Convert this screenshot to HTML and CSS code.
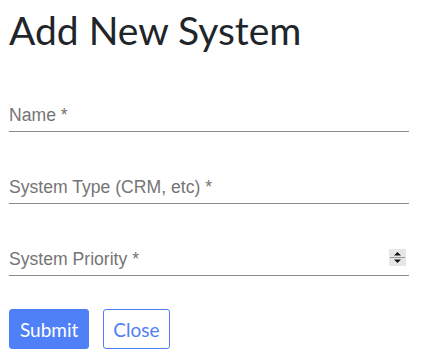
FILE: index.html
```html
<!DOCTYPE html>
<html lang="en">
<head>
    <meta charset="UTF-8">
    <meta name="viewport" content="width=device-width, initial-scale=1.0">
    <title>Add New System</title>
    <link rel="stylesheet" href="styles.css">
</head>
<body>
    <div class="page">
        <h1 class="title">Add New System</h1>
        <form class="system-form">
            <div class="field">
                <input class="field-input" type="text" placeholder="Name *">
            </div>
            <div class="field">
                <input class="field-input" type="text" placeholder="System Type (CRM, etc) *">
            </div>
            <div class="field field-number">
                <input class="field-input" type="number" placeholder="System Priority *">
                <span class="spin">
                    <svg width="17" height="17" viewBox="0 0 17 17">
                        <rect x="0" y="0" width="17" height="17" fill="#e6e6e6"/>
                        <line x1="1" y1="8.5" x2="16" y2="8.5" stroke="#9a9a9a" stroke-width="1"/>
                        <path d="M5 6.5 L8.5 3 L12 6.5 Z" fill="#111"/>
                        <path d="M5 10.5 L12 10.5 L8.5 14 Z" fill="#111"/>
                    </svg>
                </span>
            </div>
            <div class="actions">
                <button class="btn btn-primary" type="button">Submit</button>
                <button class="btn btn-outline" type="button">Close</button>
            </div>
        </form>
    </div>
</body>
</html>
```

FILE: styles.css
```css
body {
    margin: 0;
    font-family: Lato, "Noto Sans", sans-serif;
    background-color: #fff;
    color: #212529;
}
.page {
    padding: 0 9px;
}
.title {
    margin: 0;
    padding-top: 6px;
    font-size: 39px;
    font-weight: 400;
    line-height: 48px;
}
.system-form {
    width: 400px;
    margin-top: 38px;
}
.field {
    position: relative;
    margin-bottom: 32px;
}
.field-input {
    display: block;
    width: 100%;
    height: 40px;
    box-sizing: border-box;
    padding: 8px 0 0;
    border: none;
    border-bottom: 1px solid #8a8a8a;
    font-family: "Liberation Sans", Arial, sans-serif;
    font-size: 17.6px;
    color: #333;
    outline: none;
    -moz-appearance: textfield;
}
.field-input::placeholder {
    color: #757575;
}
.field-input::-webkit-inner-spin-button,
.field-input::-webkit-outer-spin-button {
    -webkit-appearance: none;
    margin: 0;
}
.spin {
    position: absolute;
    right: 3px;
    top: 13px;
    width: 17px;
    height: 17px;
    line-height: 0;
}
.actions {
    display: flex;
    gap: 14px;
    margin-top: 33px;
}
.btn {
    height: 40px;
    padding: 0 10px;
    border-radius: 3px;
    font-family: Lato, "Noto Sans", sans-serif;
    font-size: 19px;
    cursor: pointer;
}
.btn-primary {
    background-color: #4f80f7;
    border: 1px solid #4f80f7;
    color: #fff;
}
.btn-outline {
    padding: 0 9px;
    background-color: #fff;
    border: 1px solid #4f80f7;
    color: #4f80f7;
}
```
